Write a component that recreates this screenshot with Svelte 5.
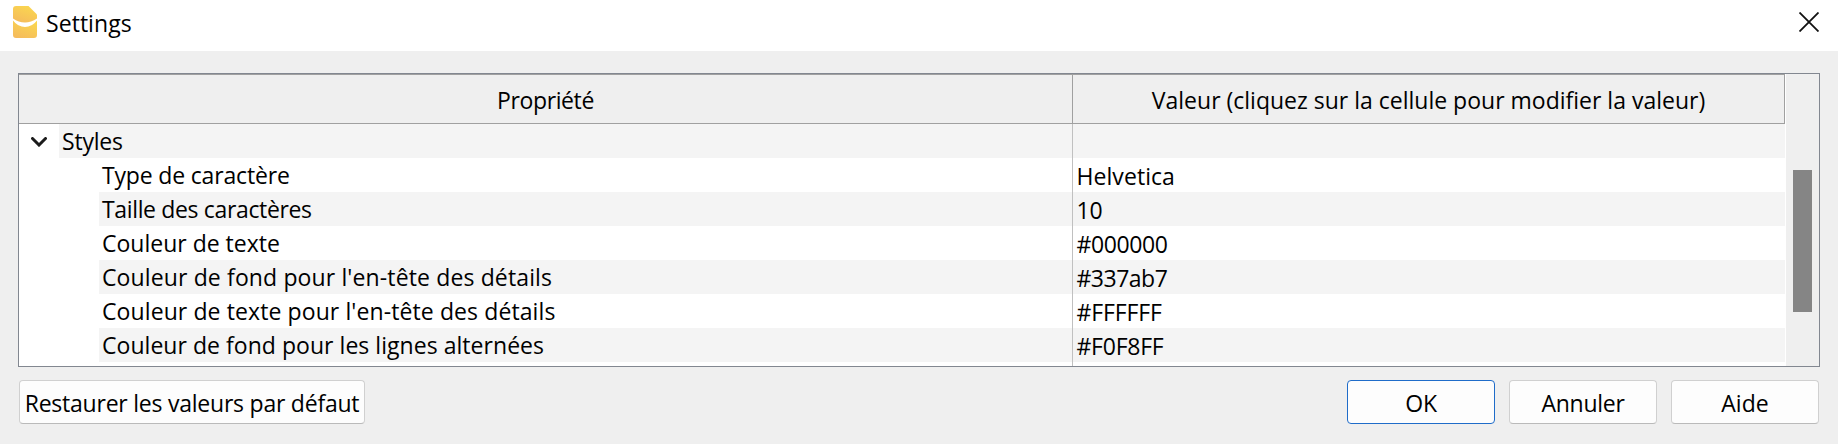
<script>
  const rows = [
    { label: 'Styles', lt: -0.2, value: '', vt: 0, group: true },
    { label: 'Type de caractère', lt: -0.17, value: 'Helvetica', vt: 0.06 },
    { label: 'Taille des caractères', lt: -0.35, value: '10', vt: -0.2 },
    { label: 'Couleur de texte', lt: 0, value: '#000000', vt: -0.38 },
    { label: "Couleur de fond pour l'en-tête des détails", lt: 0.13, value: '#337ab7', vt: -0.5 },
    { label: "Couleur de texte pour l'en-tête des détails", lt: 0.1, value: '#FFFFFF', vt: -0.1 },
    { label: 'Couleur de fond pour les lignes alternées', lt: 0.04, value: '#F0F8FF', vt: -0.25 }
  ];
  const actions = [
    { label: 'OK', track: -0.3, primary: true },
    { label: 'Annuler', track: -0.25 },
    { label: 'Aide', track: 0 }
  ];
</script>

<div class="dialog">
  <header class="titlebar">
    <svg class="logo" width="24" height="32" viewBox="0 0 24 32">
      <defs>
        <linearGradient id="gold" x1="0.7" y1="0" x2="0.2" y2="1">
          <stop offset="0" stop-color="#fad650" />
          <stop offset="1" stop-color="#f5bb5c" />
        </linearGradient>
      </defs>
      <path fill="url(#gold)" d="M3 0H15.500L24 8.500V12.500Q18 16.500 12 16.500Q5.500 16.500 0 12.500V3Q0 0 3 0Z" />
      <path fill="url(#gold)" d="M0 14.500Q5 21 12 21Q19 21 24 14.500V29Q24 32 21 32H3Q0 32 0 29Z" />
    </svg>
    <h1>Settings</h1>
    <svg class="close" width="20" height="20" viewBox="0 0 20 20">
      <path d="M0.500 0.500L19.500 19.500M19.500 0.500L0.500 19.500" stroke="#111" stroke-width="1.800" />
    </svg>
  </header>

  <main>
    <div class="tree">
      <div class="table">
        <div class="head">
          <div class="th" style="letter-spacing: -0.39px">Propriété</div>
          <div class="th" style="letter-spacing: 0px">Valeur (cliquez sur la cellule pour modifier la valeur)</div>
        </div>
        <div class="body">
          {#each rows as row, i}
            <div class="row" class:alt={i % 2 === 0}>
              <div class="branch" class:child={!row.group}>
                {#if row.group}
                  <svg width="16" height="10" viewBox="0 0 16 10">
                    <path d="M1.500 1.500L8 8L14.500 1.500" fill="none" stroke="#1b1b1b" stroke-width="3" stroke-linecap="round" />
                  </svg>
                {/if}
              </div>
              <div class="label" style="letter-spacing: {row.lt}px">{row.label}</div>
              <div class="value" style="letter-spacing: {row.vt}px">{row.value}</div>
            </div>
          {/each}
          <div class="row rest"><div class="branch"></div><div class="label"></div><div class="value"></div></div>
        </div>
      </div>
      <div class="scrollbar"><div class="thumb"></div></div>
    </div>

    <footer>
      <button class="restore">Restaurer les valeurs par défaut</button>
      {#each actions as a}
        <button class:primary={a.primary} style="letter-spacing: {a.track}px">{a.label}</button>
      {/each}
    </footer>
  </main>
</div>

<style>
  :global(body) { margin: 0; background: #efefef; }
  .dialog {
    box-sizing: border-box;
    width: 1838px;
    height: 444px;
    background: #efefef;
    font: 23px/34px "Open Sans", "Noto Sans", sans-serif;
    color: #000;
    white-space: nowrap;
    overflow: hidden;
  }
  .dialog * { box-sizing: border-box; }
  .titlebar {
    display: flex;
    align-items: flex-start;
    height: 51px;
    padding: 6px 19px 0 13px;
    background: #fff;
  }
  h1 {
    margin: 0 0 0 9px;
    font: inherit;
    letter-spacing: 0.05px;
  }
  .close { margin: 6px 0 0 auto; }
  main { padding: 22px 18px 0; }
  .tree {
    display: flex;
    height: 294px;
    border: 1px solid #828790;
  }
  .table {
    display: flex;
    flex-direction: column;
    width: 1767px;
    background: #fff;
    border-right: 1px solid #fff;
  }
  .head {
    display: grid;
    grid-template-columns: 1054px 712px;
    height: 50px;
    background: #efefef;
  }
  .th {
    border: solid #a0a0a0;
    border-width: 1px 1px 1px 0;
    padding-top: 8px;
    text-align: center;
  }
  .body { flex: 1; overflow: hidden; }
  .row { display: flex; height: 34px; }
  .branch { width: 40px; padding: 13px 0 0 12px; }
  .branch svg { display: block; }
  .branch.child { width: 80px; }
  .label {
    flex: 1;
    padding-left: 3px;
    border-right: 1px solid #c0c0c0;
  }
  .value {
    width: 712px;
    padding: 1px 0 0 3.500px;
  }
  .alt .label, .alt .value { background: #f4f4f4; }
  .rest { height: 4px; }
  .scrollbar {
    flex: 1;
    padding: 96px 0 0 7px;
    background: #efefef;
  }
  .thumb { width: 19px; height: 142px; background: #858585; }
  footer {
    display: flex;
    gap: 14px;
    padding: 13px 1px 0;
  }
  button {
    width: 148px;
    height: 44px;
    padding: 1px 0 0;
    border: 1px solid #d0d0d0;
    border-bottom-color: #bababa;
    border-radius: 4px;
    background: #fdfdfd;
    font: inherit;
    color: inherit;
    text-align: center;
  }
  .restore { width: 346px; margin-right: auto; letter-spacing: -0.23px; }
  .primary, .primary:hover { border-color: #1f6cc9; }
</style>
